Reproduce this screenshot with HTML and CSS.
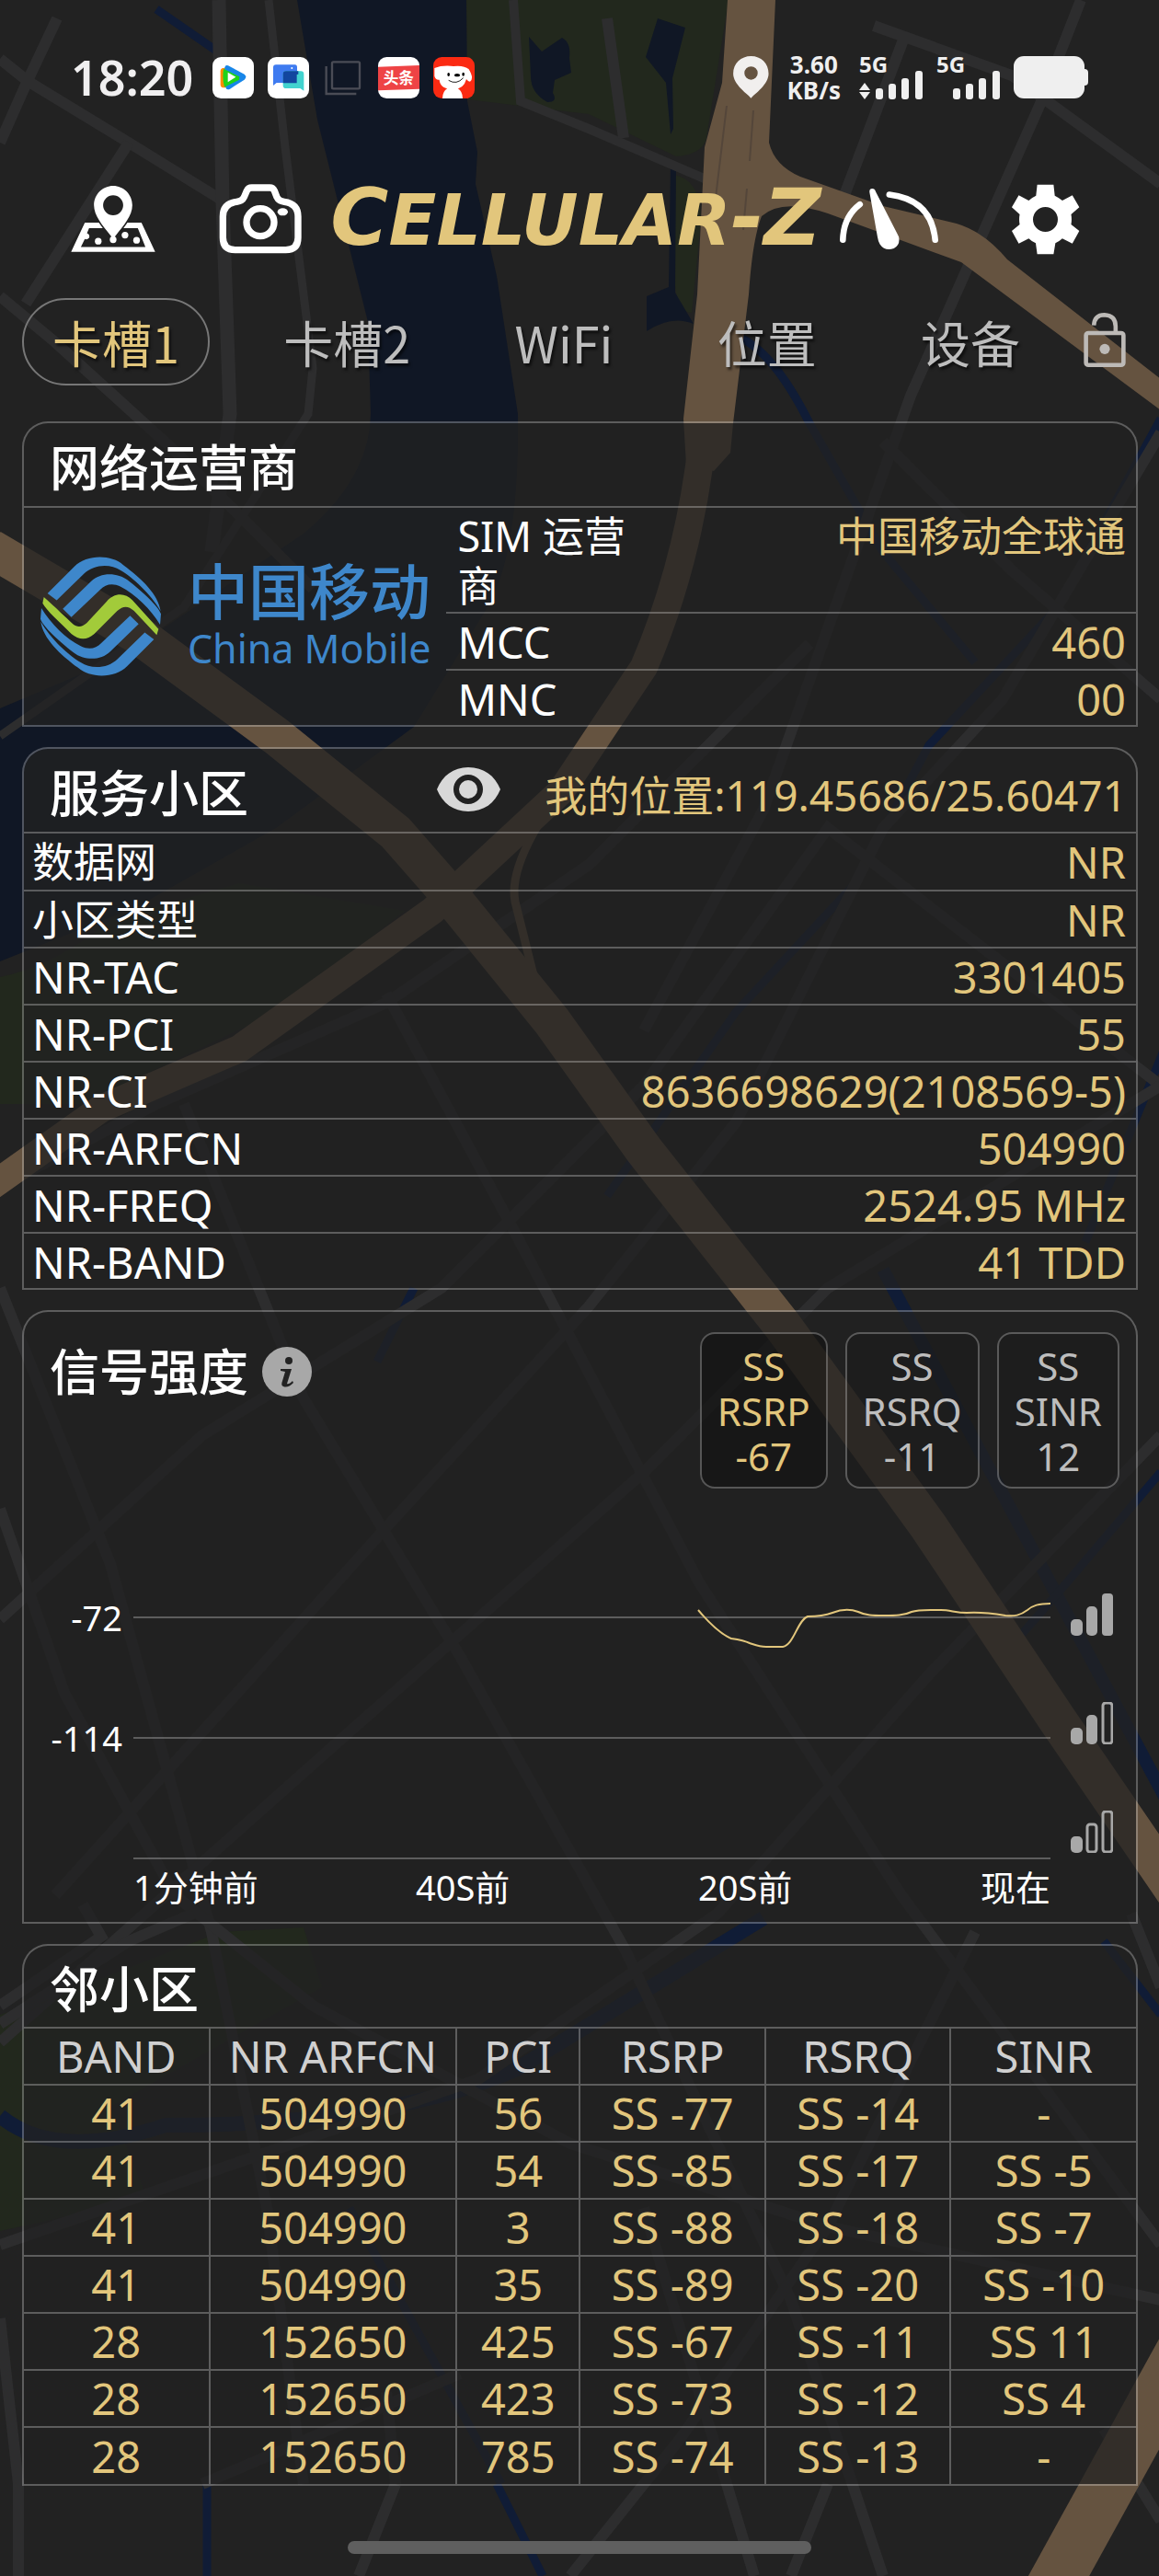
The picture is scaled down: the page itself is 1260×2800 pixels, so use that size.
FILE: index.html
```html
<!DOCTYPE html>
<html lang="zh-CN">
<head>
<meta charset="utf-8">
<meta name="viewport" content="width=device-width, initial-scale=1">
<title>Cellular-Z</title>
<link rel="stylesheet" href="styles.css">
</head>
<body>
<div class="app">
  <svg class="map" viewBox="0 0 1260 2800" preserveAspectRatio="xMidYMid slice" aria-hidden="true">
    <g fill="#22281d">
      <path d="M507 0H792L768 150Q764 168 735 170L640 124L508 108Z"/>
      <path d="M733 190Q762 195 762 240L752 340Q735 340 733 300Z"/>
      <path d="M0 1062Q60 1050 120 1000L260 960L440 990L300 1100L90 1200H0Z"/>
      <path d="M0 2190L60 2170L240 2100L330 2095L350 2160L120 2290L160 2390L0 2425Z"/>
    </g>
    <g fill="#101725">
      <path d="M323 0L345 130L400 350L403 450Q402 520 330 580L130 715L0 770V1045L150 985L300 900L450 790L530 660Q565 600 563 450L540 300L517 200L519 165L508 110L507 0Z"/>
      <path d="M575 40l14 16 22-15q10 5 8 22l2 16-18 8-2 14q6 10-6 10-18-10-18-28z"/>
      <path d="M715 20L702 62L724 90L729 146L732 140L731 85L745 30Z"/>
      <path d="M729 178H735L734 318L754 352Q730 342 703 360V322L727 312Z"/>
    </g>
    <g fill="none" stroke="#101c36" stroke-width="9">
      <path d="M800 365Q840 380 880 460L960 600L1060 720"/>
      <path d="M1262 455L1150 660L1010 810L930 960L800 1100L660 1300"/>
      <path d="M170 10L235 55"/>
      <path d="M960 1380L1120 1680L1270 1960" stroke-width="14"/>
      <path d="M450 1400L410 1480M1262 1600L1160 1720L1090 1800M1270 1130L1180 1350"/>
      <path d="M0 2300Q60 2350 180 2310Q420 2310 560 2250L830 2085" stroke-width="16"/>
      <path d="M225 2700V2800M540 2700L590 2800M380 2400L545 2700M1262 2190L1200 2110"/>
    </g>
    <g fill="none" stroke="#2d2d2e" stroke-width="12">
      <path d="M62 20L28 92L0 155M0 64L30 88L140 155L242 218"/>
      <path d="M140 155L28 330M0 322L60 372L190 490L340 640"/>
      <path d="M238 0L242 220L250 450L230 600" stroke-width="15"/>
      <path d="M292 0L310 160L340 400L335 450L200 660L0 800" stroke-width="9"/>
      <path d="M558 0L566 110L640 140L770 196" stroke-width="10"/>
      <path d="M660 20L678 150"/>
      <path d="M984 38L918 212M950 28L1100 82L1262 200M1175 0L1130 115L990 430L830 880L700 1120" />
      <path d="M1262 470L1090 760L960 900L800 1220L640 1420L420 1660L60 2060"/>
      <path d="M960 480L1100 620L1262 760M0 1290L170 1200L420 1090L640 940L880 700"/>
      <path d="M0 1400L120 1700L230 2100L290 2400L330 2700"/>
      <path d="M200 1200L330 1520L500 1800L680 2120L860 2500L960 2800"/>
      <path d="M420 1080L560 1340L760 1720L980 2060L1262 2440"/>
      <path d="M0 1760L220 1560L480 1400L700 1180L900 900L1262 1180"/>
      <path d="M0 2220L360 1900L700 1600L900 1400L1262 1180"/>
      <path d="M0 1640L70 1840L190 2060L340 2180L620 2330L900 2420L1262 2500"/>
      <path d="M0 2440L260 2350L520 2260L780 2080L1010 1820L1262 1560"/>
      <path d="M0 2520L20 2700V2800M220 2700L500 2580M430 2700L390 2800M620 2800L740 2650L900 2420L1060 2100"/>
      <path d="M420 2600L430 2700M900 2700L860 2800M700 2400L820 2800M1200 2640L1262 2740M1230 2080L1262 2160"/>
      <path d="M0 2200L140 2110L210 2080M0 2180L110 2105L90 2070"/>
    </g>
    <g fill="none" stroke="#655340">
      <path d="M-10 596L150 690L300 800L430 905L480 962L600 1110L700 1250L850 1440L1010 1660L1150 1870L1280 2060" stroke-width="42"/>
      <path d="M761 500Q745 620 700 725L610 860L470 990L260 1140L110 1205L-10 1290" stroke-width="30"/>
      <path d="M640 820Q550 930 560 980L580 1060" stroke-width="9"/>
      <path d="M1300 2530L1140 2820" stroke-width="58"/>
    </g>
    <path fill="#655340" d="M791 0H843L836 155Q842 180 870 192L960 224L1040 243Q1070 252 1095 282L1262 412V446L1045 285L900 232Q850 215 828 235Q818 260 814 320L797 460L794 492L776 512L746 505L743 455L758 320L766 160L785 90Z"/>
    <path fill="none" stroke="#54463a" stroke-width="2" d="M790 115L778 215M819 120L815 175M812 205L808 250"/>
  </svg>

  <header class="status">
    <span class="clock">18:20</span>
    <svg class="app-ic" viewBox="0 0 135 135" aria-hidden="true">
      <rect width="135" height="135" rx="28" fill="#fff"/>
      <path d="M26 46q0-9 9-10h12v64H35q-9-1-9-10z" fill="#ff8a00"/>
      <path d="M40 34q2-9 11-6l53 28q10 8 0 18l-47 30q-12 5-14-6z" fill="#1886e8"/>
      <path d="M36 38l52 26-1 10-48 24q-8-28-3-60z" fill="#1fd21a"/><path d="M50 50l26 15-26 17z" fill="#fff"/>
    </svg>
    <svg class="app-ic" viewBox="0 0 135 135" aria-hidden="true">
      <rect width="135" height="135" rx="28" fill="#fff"/>
      <path d="M18 34q0-9 9-9h62q7 0 7 9v50H29l-11 9z" fill="#3f7bf0"/>
      <path d="M50 56q0-10 10-10h48q10 0 10 10v54l-12-8H60q-10 0-10-10z" fill="#42d3cf"/>
      <path d="M50 56q0-10 10-10h40v10l-5 1v28H50z" fill="#12469f"/><circle cx="79" cy="36" r="3" fill="#fff"/>
    </svg>
    <svg class="app-ic" viewBox="0 0 135 135" aria-hidden="true" fill="none" stroke="#4a4c55" stroke-width="7">
      <rect x="30" y="16" width="90" height="87" rx="4"/><path d="M11 30v90h98"/>
    </svg>
    <svg class="app-ic" viewBox="0 0 135 135" aria-hidden="true">
      <rect width="135" height="135" rx="28" fill="#fff"/>
      <path d="M0 32L135 27V104L0 109Z" fill="#ee4345"/>
      <text x="67" y="87" text-anchor="middle" class="app-word">头条</text>
    </svg>
    <svg class="app-ic" viewBox="0 0 135 135" aria-hidden="true">
      <rect width="135" height="135" rx="28" fill="#fb2a12"/>
      <path d="M4 36Q30 26 66 30Q100 26 116 40Q134 70 120 80Q112 78 108 72Q100 104 66 106Q22 104 20 74Q8 76 4 62Z" fill="#fff"/>
      <path d="M30 135Q30 112 46 102H80Q96 112 96 135Z" fill="#fff"/>
      <ellipse cx="78" cy="59" rx="9" ry="5"/><ellipse cx="50" cy="57" rx="4" ry="6"/><ellipse cx="98" cy="56" rx="4" ry="6"/>
      <path d="M50 76Q76 92 98 68" fill="none" stroke="#222" stroke-width="3"/>
    </svg>
    <div class="status-right">
      <svg class="pin-ic" viewBox="54 36 118 140" aria-hidden="true"><path fill="#f1efee" fill-rule="evenodd" d="M113 36C80 36 54 60 54 94C54 130 100 160 113 175C126 160 171 130 171 94C171 60 146 36 113 36ZM113 70a22 22 0 1 1 0 44a22 22 0 1 1 0-44Z"/></svg>
      <span class="speed"><b>3.60</b><b>KB/s</b></span>
      <span class="cell-sig"><b>5G</b>
        <svg viewBox="0 0 70 32" aria-hidden="true" fill="#efefef"><path d="M0 22L6 14L12 22ZM0 24H12L6 32Z"/><rect x="18" y="20" width="8" height="12" rx="3"/><rect x="32" y="15" width="8" height="17" rx="3"/><rect x="46" y="9" width="8" height="23" rx="3"/><rect x="61" y="1" width="8" height="31" rx="3"/></svg></span>
      <span class="cell-sig"><b>5G</b>
        <svg viewBox="0 0 70 32" aria-hidden="true" fill="#efefef"><rect x="18" y="20" width="8" height="12" rx="3"/><rect x="32" y="15" width="8" height="17" rx="3"/><rect x="46" y="9" width="8" height="23" rx="3"/><rect x="61" y="1" width="8" height="31" rx="3"/></svg></span>
      <svg class="batt-ic" viewBox="0 0 81 46" aria-hidden="true" fill="#efefef"><rect width="77" height="46" rx="11"/><rect x="70" y="14" width="11" height="18" rx="4"/></svg>
    </div>
  </header>

  <div class="toolbar">
    <button class="icon-btn map-btn" type="button" aria-label="地图">
      <svg viewBox="50 457 278 220" aria-hidden="true" fill="#fff">
        <path fill-rule="evenodd" d="M189 458C155 458 126 486 126 522C126 560 160 595 189 632C218 595 252 560 252 522C252 486 223 458 189 458ZM189 489a33 33 0 1 1 0 66a33 33 0 1 1 0-66Z"/>
        <path d="M96 579H142L155 597H110L103 614Q114 618 110 629Q104 636 96 633L83 659H295L270 597H223L236 579H282L327 675H51Z"/>
        <circle cx="140" cy="640" r="11"/><circle cx="189" cy="635" r="11"/><circle cx="228" cy="620" r="11"/><circle cx="266" cy="637" r="11"/>
      </svg>
    </button>
    <button class="icon-btn cam-btn" type="button" aria-label="截图">
      <svg viewBox="532 452 270 228" aria-hidden="true" fill="none" stroke="#fff" stroke-width="22">
        <path d="M639 464H698Q708 464 713 474L721 495Q727 508 745 510Q790 516 790 558V627Q790 667 750 667H585Q545 667 545 627V558Q545 516 590 510Q608 508 614 495L623 474Q628 464 639 464Z"/>
        <circle cx="667" cy="577" r="45"/><ellipse cx="740" cy="543" rx="17" ry="12" fill="#fff" stroke="none"/>
      </svg>
    </button>
    <h1 class="brand">C<span class="brand-small">ELLULAR</span>-Z</h1>
    <button class="icon-btn gauge-btn" type="button" aria-label="测速">
      <svg viewBox="400 464 328 206" aria-hidden="true" fill="none" stroke="#fff" stroke-width="20" stroke-linecap="round">
        <path d="M412 636Q414 560 468 519M565 487Q704 504 716 636"/>
        <path fill="#fff" stroke="none" d="M500 480Q498 467 509 467Q517 467 520 477L596 625Q602 652 580 664Q550 674 534 650Q528 640 526 626Z"/>
      </svg>
    </button>
    <button class="icon-btn gear-btn" type="button" aria-label="设置">
      <svg viewBox="958 450 226 234" aria-hidden="true"><path fill="#fff" fill-rule="evenodd" d="M1044 452H1098L1102 489Q1116 496 1127 505L1160 487L1183 527L1156 550Q1159 567 1156 584L1183 605L1160 647L1127 630Q1116 640 1104 645L1098 682H1044L1039 645Q1026 640 1016 630L983 647L960 605L986 584Q983 567 986 550L960 527L983 487L1016 505Q1027 495 1040 489ZM1071 526a41 41 0 1 0 0 82a41 41 0 1 0 0-82Z"/></svg>
    </button>
  </div>

  <div class="tab-bar">
    <nav class="tabs">
      <button class="tab tab-on" type="button">卡槽1</button>
      <button class="tab" type="button">卡槽2</button>
      <button class="tab" type="button">WiFi</button>
      <button class="tab" type="button">位置</button>
      <button class="tab" type="button">设备</button>
    </nav>
    <button class="icon-btn lock-btn" type="button" aria-label="锁定">
      <svg viewBox="1192 868 140 184" aria-hidden="true" fill="none" stroke="#bdbab7" stroke-width="14"><rect x="1200" y="937" width="124" height="106" rx="8"/><path d="M1226 912Q1228 877 1261 877Q1298 879 1298 915V937"/><circle cx="1262" cy="990" r="17" fill="#bdbab7" stroke="none"/></svg>
    </button>
  </div>

  <main class="cards">
    <section class="card">
      <div class="card-head"><h2>网络运营商</h2></div>
      <div class="carrier">
        <div class="carrier-logo">
          <svg viewBox="36 28 400 390" aria-hidden="true">
            <g fill="#3e87cb">
              <path d="M62 148L150 60C190 20 270 20 310 55C370 100 424 150 432 206C400 150 340 95 300 72C270 52 215 50 180 85L92 170Z"/>
              <path d="M112 198L205 108C235 78 290 78 325 105C370 140 425 190 433 215L430 250C400 200 350 150 300 125C275 113 250 118 235 135L140 225Z"/>
              <g transform="rotate(180 236 223)">
                <path d="M62 148L150 60C190 20 270 20 310 55C370 100 424 150 432 206C400 150 340 95 300 72C270 52 215 50 180 85L92 170Z"/>
                <path d="M112 198L205 108C235 78 290 78 325 105C370 140 425 190 433 215L430 250C400 200 350 150 300 125C275 113 250 118 235 135L140 225Z"/>
              </g>
            </g>
            <path fill="#a2cb3a" d="M50 160C90 195 120 225 145 248C160 260 175 258 190 245L255 175C280 145 315 145 340 170L425 264L419 284L345 205C325 188 310 188 290 205L215 280C190 302 165 300 140 280C100 240 60 205 46 180Z"/>
          </svg>
          <div class="carrier-name"><span class="carrier-zh">中国移动</span><span class="carrier-en">China Mobile</span></div>
        </div>
        <table class="kv kv-carrier">
          <tbody>
            <tr><th scope="row" class="zh">SIM 运营商</th><td class="zh">中国移动全球通</td></tr>
            <tr><th scope="row">MCC</th><td>460</td></tr>
            <tr><th scope="row">MNC</th><td>00</td></tr>
          </tbody>
        </table>
      </div>
    </section>

    <section class="card">
      <div class="card-head">
        <h2>服务小区</h2>
        <div class="my-pos">
          <button class="icon-btn eye-btn" type="button" aria-label="显示位置">
            <svg viewBox="0 0 69 48" aria-hidden="true"><path fill="#d8d8d8" fill-rule="evenodd" d="M34 0C18 0 6 9 0 24C6 39 18 48 34 48C51 48 63 39 69 24C63 9 51 0 34 0ZM34 8a16 16 0 1 0 0 32a16 16 0 1 0 0-32Z"/><circle cx="34" cy="24" r="10" fill="#d8d8d8"/></svg>
          </button>
          <span class="pos-text">我的位置:119.45686/25.60471</span>
        </div>
      </div>
      <table class="kv">
        <tbody>
          <tr><th scope="row" class="zh">数据网</th><td>NR</td></tr>
          <tr><th scope="row" class="zh">小区类型</th><td>NR</td></tr>
          <tr><th scope="row">NR-TAC</th><td>3301405</td></tr>
          <tr><th scope="row">NR-PCI</th><td>55</td></tr>
          <tr><th scope="row">NR-CI</th><td>8636698629(2108569-5)</td></tr>
          <tr><th scope="row">NR-ARFCN</th><td>504990</td></tr>
          <tr><th scope="row">NR-FREQ</th><td>2524.95 MHz</td></tr>
          <tr><th scope="row">NR-BAND</th><td>41 TDD</td></tr>
        </tbody>
      </table>
    </section>

    <section class="card">
      <div class="signal-head">
        <h2>信号强度</h2>
        <button class="icon-btn info-btn" type="button" aria-label="说明">
          <svg viewBox="0 0 54 54" aria-hidden="true"><circle cx="27" cy="27" r="27" fill="#a8a8a8"/><circle cx="29" cy="15" r="4" fill="#222"/><path d="M20 24H32L27 40Q29 41 33 37L34 39Q28 45 23 43Q20 42 22 37L25 27L20 26Z" fill="#222"/></svg>
        </button>
        <div class="metrics">
          <button class="metric metric-on" type="button">SS<br>RSRP<br>-67</button>
          <button class="metric" type="button">SS<br>RSRQ<br>-11</button>
          <button class="metric" type="button">SS<br>SINR<br>12</button>
        </div>
      </div>
      <div class="chart">
        <div class="y-labels"><span>-72</span><span>-114</span></div>
        <div class="plot">
          <div class="band"></div><div class="band"></div><div class="band"></div>
          <svg class="curve" viewBox="0 0 997 393" preserveAspectRatio="none" aria-hidden="true"><path d="M614 122C625 135 638 148 650 153C657 154 664 155 670 158C676 160 680 162 688 162H706C718 160 722 133 733 129C742 129 752 128 760 125C770 121 780 121 788 124C796 128 804 128 816 128S838 128 846 124C854 121 866 122 878 122C888 122 894 125 906 125C920 124 936 126 948 128C958 129 964 128 972 122C978 117 984 115 997 115" fill="none" stroke="#e2c67c" stroke-width="2"/></svg>
        </div>
        <div class="levels">
          <svg viewBox="0 0 46 46" aria-hidden="true"><rect y="28" width="13" height="18" rx="5"/><rect x="17" y="14" width="12" height="32" rx="5"/><rect x="34" y="0" width="12" height="46" rx="4"/></svg>
          <svg viewBox="0 0 46 46" aria-hidden="true"><rect y="28" width="13" height="18" rx="5"/><rect x="17" y="14" width="12" height="32" rx="5"/><rect class="hollow" x="35" y="1" width="10" height="44" rx="3"/></svg>
          <svg viewBox="0 0 46 46" aria-hidden="true"><rect y="28" width="13" height="18" rx="5"/><rect class="hollow" x="18" y="15" width="10" height="30" rx="3"/><rect class="hollow" x="35" y="1" width="10" height="44" rx="3"/></svg>
        </div>
        <div class="x-labels"><span>1分钟前</span><span>40S前</span><span>20S前</span><span>现在</span></div>
      </div>
    </section>

    <section class="card">
      <div class="card-head card-head-plain"><h2>邻小区</h2></div>
      <table class="cells">
        <colgroup><col class="c3"><col class="c4"><col class="c2"><col class="c3"><col class="c3"><col class="c3"></colgroup>
        <thead><tr><th>BAND</th><th>NR ARFCN</th><th>PCI</th><th>RSRP</th><th>RSRQ</th><th>SINR</th></tr></thead>
        <tbody>
          <tr><td>41</td><td>504990</td><td>56</td><td>SS -77</td><td>SS -14</td><td>-</td></tr>
          <tr><td>41</td><td>504990</td><td>54</td><td>SS -85</td><td>SS -17</td><td>SS -5</td></tr>
          <tr><td>41</td><td>504990</td><td>3</td><td>SS -88</td><td>SS -18</td><td>SS -7</td></tr>
          <tr><td>41</td><td>504990</td><td>35</td><td>SS -89</td><td>SS -20</td><td>SS -10</td></tr>
          <tr><td>28</td><td>152650</td><td>425</td><td>SS -67</td><td>SS -11</td><td>SS 11</td></tr>
          <tr><td>28</td><td>152650</td><td>423</td><td>SS -73</td><td>SS -12</td><td>SS 4</td></tr>
          <tr><td>28</td><td>152650</td><td>785</td><td>SS -74</td><td>SS -13</td><td>-</td></tr>
        </tbody>
      </table>
    </section>
  </main>
  <div class="home-bar"></div>
</div>
</body>
</html>
```
FILE: styles.css
```css
:root {
  --gold: #e2c67c;
  --line: rgba(255, 255, 255, 0.27);
  --grey: #bdbdbd;
}

* { box-sizing: border-box; }

body {
  margin: 0;
  background: #222;
  color: #fff;
  font-family: "Noto Sans", "Noto Sans CJK SC", sans-serif;
  font-size: 47px;
}

h1, h2 { margin: 0; }

.app {
  position: relative;
  overflow: hidden;
  min-height: 100vh;
}

.map {
  position: absolute;
  inset: 0;
  width: 100%;
  height: 100%;
}

.status, .toolbar, .tab-bar, .cards, .home-bar { position: relative; }

.icon-btn {
  display: block;
  flex: none;
  padding: 0;
  border: 0;
  background: none;
}

.icon-btn svg { display: block; width: 100%; height: 100%; }

/* status bar */
.status {
  display: flex;
  align-items: center;
  gap: 15px;
  height: 60px;
  margin-top: 54px;
  padding: 0 77px;
}

.clock {
  margin-right: 6px;
  color: #f0eff0;
  font-size: 52px;
  font-weight: 600;
  line-height: 60px;
}

.app-ic { flex: none; width: 45px; height: 45px; }

.app-word {
  fill: #fff;
  font-family: "Noto Sans CJK SC", sans-serif;
  font-size: 50px;
  font-weight: 700;
}

.status-right {
  display: flex;
  align-items: center;
  gap: 14px;
  margin-left: auto;
  color: #efefef;
}

.pin-ic { width: 39px; height: 46px; }

.speed {
  display: grid;
  justify-items: center;
  margin: 0 6px;
  font-size: 26px;
  line-height: 28px;
}

.cell-sig {
  display: grid;
  width: 70px;
  font-size: 24px;
  line-height: 20px;
}

.cell-sig svg { width: 70px; height: 32px; margin-top: -4px; }
.cell-sig b { height: 20px; }

.batt-ic { width: 81px; height: 46px; }

/* toolbar */
.toolbar {
  display: flex;
  align-items: center;
  height: 76px;
  margin-top: 86px;
  padding: 0 86px 0 77px;
}

.map-btn { width: 92px; height: 74px; margin-right: 69px; }
.cam-btn { width: 90px; height: 76px; }
.gauge-btn { width: 109px; height: 68px; margin-right: 78px; }
.gear-btn { width: 75px; height: 77px; }
.lock-btn { width: 46px; height: 61px; margin-bottom: 4px; }

.brand {
  flex: 1;
  padding-left: 12px;
  color: var(--gold);
  font-family: "DejaVu Sans", sans-serif;
  font-size: 86px;
  font-style: oblique;
  font-weight: 700;
  line-height: 76px;
  text-align: center;
  white-space: nowrap;
}

.brand-small { font-size: 76px; }

/* tabs */
.tab-bar {
  display: flex;
  align-items: center;
  gap: 36px;
  margin-top: 48px;
  padding: 0 36px 0 24px;
}

.tabs {
  display: flex;
  flex: 1;
  justify-content: space-between;
}

.tab {
  height: 95px;
  padding: 0 31px;
  border: 2px solid transparent;
  border-radius: 48px;
  background: none;
  color: var(--grey);
  font: 400 54px/80px "Noto Sans CJK SC", sans-serif;
  text-shadow: 2px 3px 3px rgba(0, 0, 0, 0.6);
  white-space: nowrap;
}

.tab-on { border-color: #777; color: var(--gold); }

/* cards */
.cards {
  display: grid;
  gap: 22px;
  margin-top: 39px;
  padding: 0 23px 0 24px;
}

.card {
  border: 2px solid var(--line);
  border-radius: 28px 28px 0 0;
  background: rgba(34, 34, 34, 0.74);
  background-clip: padding-box;
}

.card h2 {
  font-size: 54px;
  font-weight: 500;
  line-height: 80px;
}

.card-head {
  display: flex;
  align-items: center;
  justify-content: space-between;
  height: 92px;
  padding: 6px 10px 0 28px;
  border-bottom: 2px solid var(--line);
}

.zh { font-size: 45px; }

.my-pos {
  display: flex;
  align-items: center;
  gap: 48px;
  color: var(--gold);
}

.pos-text { font-size: 46px; }
.eye-btn { width: 69px; height: 48px; margin-bottom: 8px; }

.carrier { display: flex; }

.carrier-logo {
  display: flex;
  flex: 0 0 38%;
  align-items: center;
  justify-content: center;
  gap: 28px;
  color: #3e87cb;
}

.carrier-logo svg { width: 133px; height: 130px; }

.carrier-name {
  display: grid;
  gap: 4px;
}

.carrier-zh { font-size: 66px; font-weight: 500; line-height: 66px; }
.carrier-en { font-size: 43px; line-height: 52px; }

.kv {
  width: 100%;
  border-collapse: collapse;
  line-height: 54px;
}

.kv th, .kv td {
  height: 62px;
  padding: 4px 11px 1px 9px;
  border-bottom: 2px solid var(--line);
  font-weight: 400;
  vertical-align: top;
}

.kv th { text-align: left; }
.kv td { color: var(--gold); text-align: right; }
.kv-carrier th { width: 30%; padding-left: 12px; }
.kv tr:last-child > * { height: 60px; border-bottom: 0; }

/* signal strength */
.signal-head {
  display: flex;
  align-items: flex-start;
  padding: 22px 18px 0 28px;
}

.signal-head h2 { padding-top: 3px; }
.info-btn { width: 54px; height: 54px; margin: 16px 0 0 15px; }

.metrics {
  display: flex;
  gap: 19px;
  margin-left: auto;
}

.metric {
  height: 170px;
  padding: 0 17px;
  border: 2px solid var(--line);
  border-radius: 16px;
  background: rgba(0, 0, 0, 0.12);
  color: var(--grey);
  font: 400 42px/49px "Noto Sans", sans-serif;
}

.metric-on { background: rgba(0, 0, 0, 0.28); color: var(--gold); }

.chart {
  display: grid;
  grid-template-columns: 119px 1fr 93px;
  grid-template-rows: auto auto;
  padding-top: 10px;
  font-size: 38px;
  line-height: 60px;
}

.y-labels {
  padding: 65px 12px 0 0;
  text-align: right;
}

.y-labels span { display: block; line-height: 131px; }
.plot { position: relative; height: 393px; }
.band { height: 131px; border-bottom: 2px solid var(--line); }

.curve {
  position: absolute;
  inset: 0;
  width: 100%;
  height: 100%;
}

.levels {
  display: grid;
  grid-row: 1 / span 2;
  grid-column: 3;
  grid-auto-rows: 118px;
  align-content: start;
  align-items: center;
  padding: 68px 0 0 22px;
}

.levels svg { width: 46px; height: 46px; fill: #a8a8a8; }
.levels .hollow { fill: none; stroke: #a8a8a8; stroke-width: 3; }

.x-labels {
  display: grid;
  grid-row: 2;
  grid-column: 2;
  grid-template-columns: 1fr 1fr 1fr auto;
  padding-bottom: 8px;
}

/* neighbour cells */
.card-head-plain { border-bottom: 0; height: 88px; }

.cells {
  width: 100%;
  border-collapse: collapse;
  table-layout: fixed;
  line-height: 54px;
  text-align: center;
}

.cells th, .cells td {
  height: 62px;
  padding: 2px 0;
  border-top: 2px solid var(--line);
  border-left: 2px solid var(--line);
  color: var(--gold);
  font-weight: 400;
  white-space: nowrap;
}

.cells th { color: #d0d0d0; }
.cells tr > :first-child { border-left: 0; }
.c2 { width: 11.11%; }
.c3 { width: 16.67%; }
.c4 { width: 22.22%; }

.home-bar {
  width: 40%;
  height: 14px;
  margin: 60px auto 24px;
  border-radius: 7px;
  background: #5f5f5f;
}
```
